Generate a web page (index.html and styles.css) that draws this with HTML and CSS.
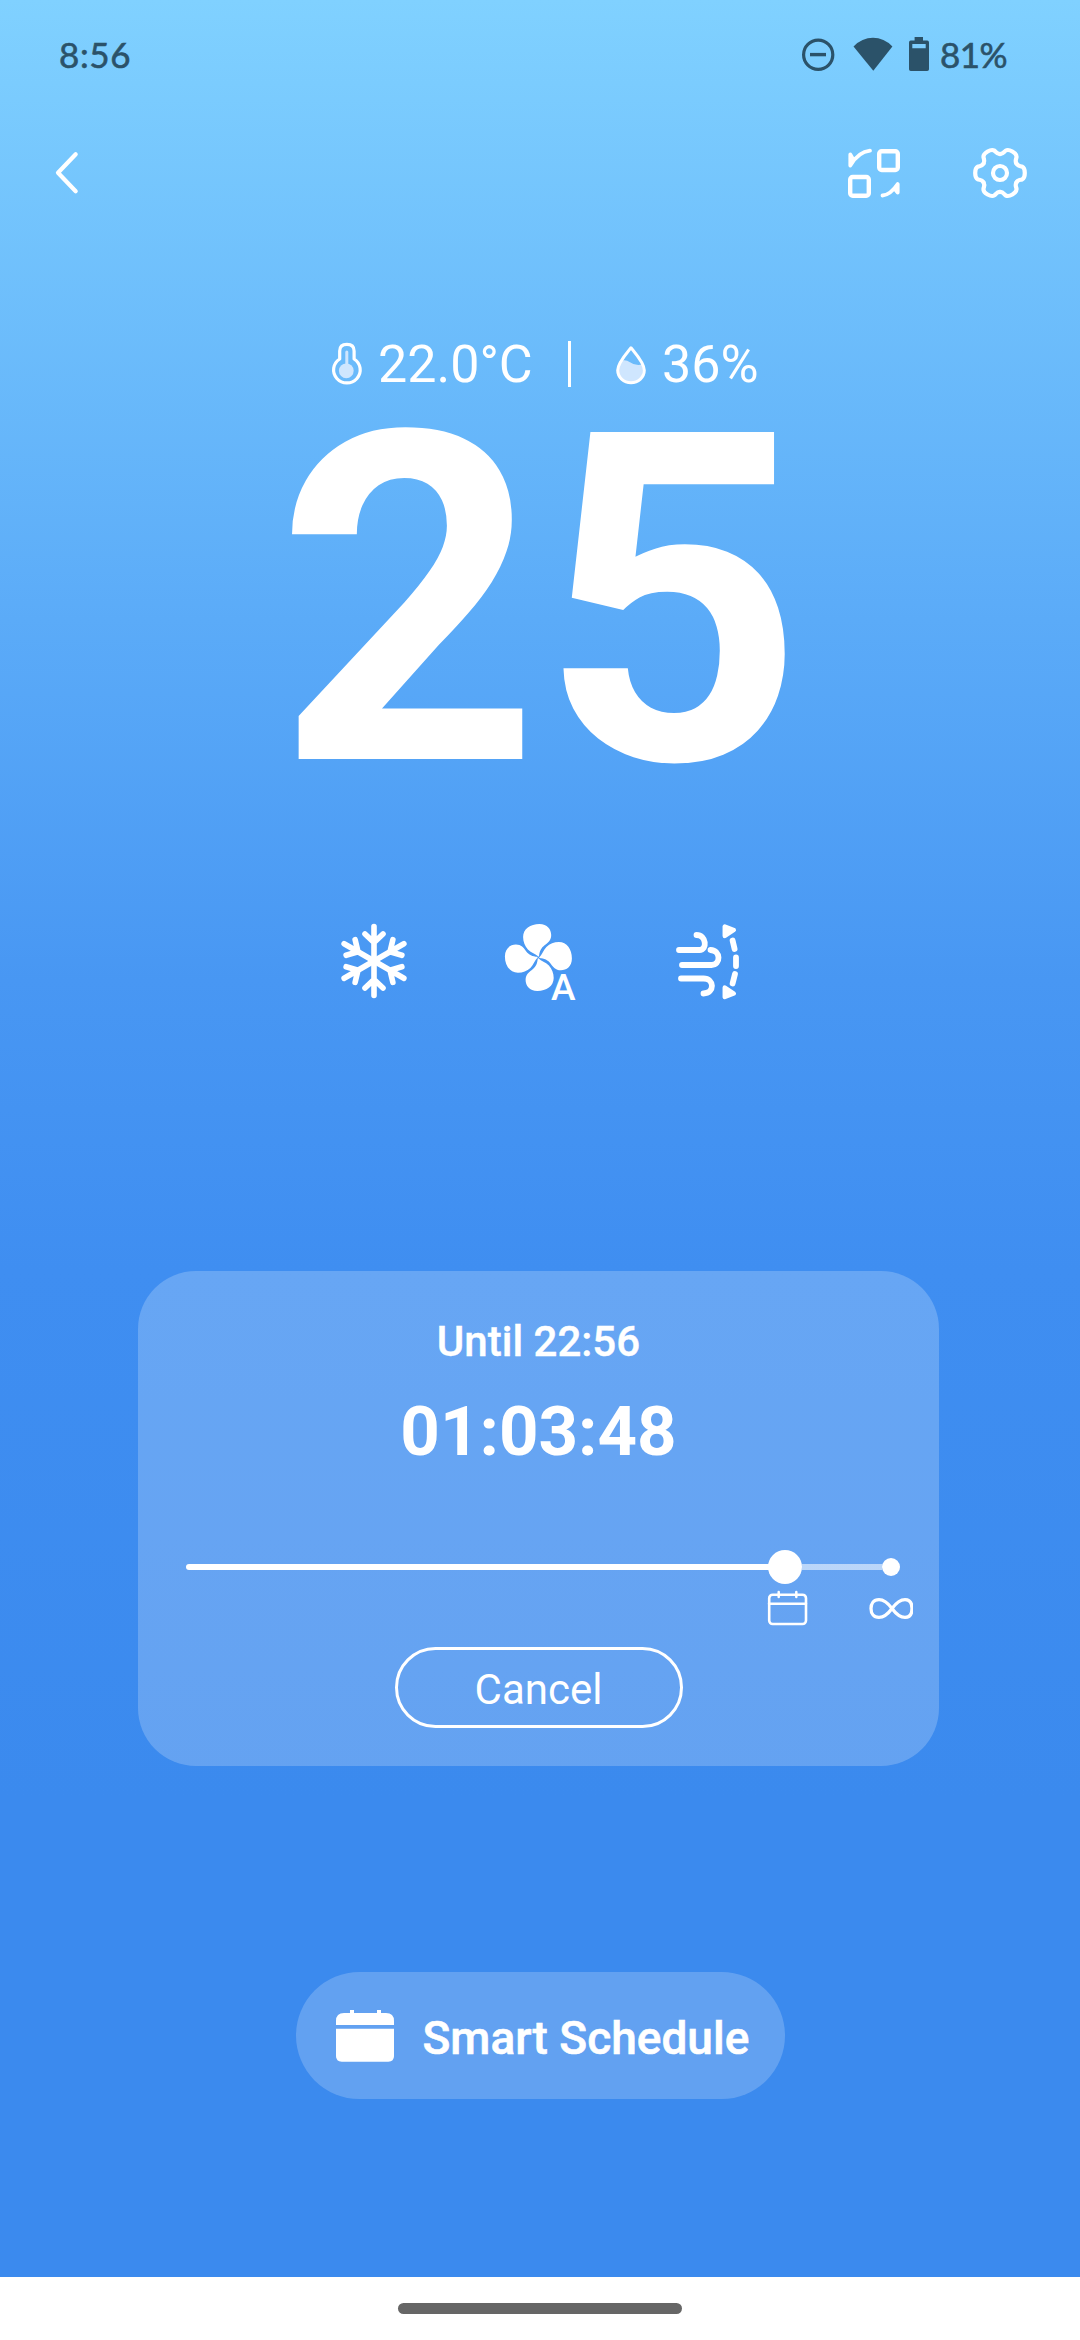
FILE: index.html
```html
<!DOCTYPE html>
<html lang="en">
<head>
<meta charset="utf-8">
<title>Air conditioner</title>
<link rel="stylesheet" href="styles.css">
</head>
<body>
<main class="screen">
  <header class="status">
    <span class="clock">8:56</span>
    <svg class="status-icons" width="132" height="40" viewBox="800 35 132 40">
      <circle cx="818.2" cy="54.7" r="14.6" fill="none" stroke="currentColor" stroke-width="3.2"/>
      <path d="M810 54.6h16" stroke="currentColor" stroke-width="3.4"/>
      <path d="M853.5 46.5Q862 37.8 873 37.8T892.4 46.5L873.3 70.8Z" fill="currentColor"/>
      <path fill-rule="evenodd" d="M914.6 37h8.4v3.6h4.2q1.8 0 1.8 1.8v26.8q0 1.8-1.8 1.8h-16.4q-1.8 0-1.8-1.8V42.400q0-1.800 1.800-1.800h3.800zM912.300 44v4.200h13.400V44z" fill="currentColor"/>
    </svg>
    <span class="battery">81%</span>
  </header>

  <nav class="toolbar">
    <svg width="30" height="50" viewBox="52 148 30 50" class="line">
      <path d="M75.700 154.200L58 172.700l17.700 18.500" stroke-width="4.200"/>
    </svg>
    <div class="actions">
      <svg width="56" height="56" viewBox="846 145 56 56" class="line">
        <rect x="879.200" y="151.200" width="18.600" height="18.800" rx="2.500" stroke-width="4.400"/>
        <rect x="850.200" y="177" width="18.600" height="18.800" rx="2.500" stroke-width="4.400"/>
        <path d="M870 150.700C862 151.500 856 156 850.300 165.500V154.500L853.500 160" stroke-width="3.800"/>
        <path d="M882.500 195.500C889 195 893 191 897.700 184V192.500L894.500 188.500" stroke-width="3.800"/>
      </svg>
      <svg width="60" height="56" viewBox="-30 -28 60 56" class="line gear">
        <defs><path id="tooth" d="M16.400-9.500C18.200-6.400 20.300-7.200 22.200-6.300C24.200-5.300 24.800-3.600 24.800 0S24.200 5.300 22.200 6.300C20.300 7.200 18.200 6.400 16.400 9.500"/></defs>
        <use href="#tooth"/><use href="#tooth" transform="rotate(60)"/><use href="#tooth" transform="rotate(120)"/>
        <use href="#tooth" transform="rotate(180)"/><use href="#tooth" transform="rotate(240)"/><use href="#tooth" transform="rotate(300)"/>
        <circle r="7"/>
      </svg>
    </div>
  </nav>

  <section class="climate">
    <svg width="34" height="46" viewBox="330 339 34 46" class="line">
      <path d="M339.700 357V349q0-6.700 7.200-6.700t7.200 6.700v8a13.300 13 0 1 1-14.400 0z" stroke-width="3.200"/>
      <circle cx="346.300" cy="368.800" r="7.400" class="soft"/>
      <path d="M346.800 350v18" class="soft-line" stroke-width="3"/>
    </svg>
    <span class="reading temp">22.0°C</span>
    <i class="divider"></i>
    <svg width="34" height="46" viewBox="614 339 34 46" class="line drop">
      <path d="M619.500 359.500q5.500-3 10.500.8t12.500 2.200q3 18-11.500 18t-13.500-12z" class="soft"/>
      <path d="M631 345.800C636 352 644.300 361 644.300 368.300A13.300 12.500 0 0 1 617.700 368.300C617.700 361 626 352 631 345.800z" stroke-width="3"/>
    </svg>
    <span class="reading">36%</span>
  </section>

  <div class="target">25</div>

  <section class="modes">
    <svg width="70" height="80" viewBox="-35 -40 70 80" class="line snow">
      <defs><path id="arm" d="M0 0V-34.500M-9-27L0-18.500L9-27"/></defs>
      <use href="#arm"/><use href="#arm" transform="rotate(60)"/><use href="#arm" transform="rotate(120)"/>
      <use href="#arm" transform="rotate(180)"/><use href="#arm" transform="rotate(240)"/><use href="#arm" transform="rotate(300)"/>
    </svg>
    <svg width="80" height="92" viewBox="503 921 80 92" fill="#fff">
      <defs><path id="blade" d="M0-.8C-3-4-7-4.500-10.500-8C-13.500-11.500-15.300-15.500-15.300-20.500C-15.300-28.500-8-33.500 1-33.500C9-33.500 12.800-28 12.800-22.500C12.800-17 9.500-14.800 6.500-12.500C2.500-9.500 1-6 .6-.8Z"/></defs>
      <g transform="translate(538.400 957.400)"><use href="#blade"/><use href="#blade" transform="rotate(90)"/><use href="#blade" transform="rotate(180)"/><use href="#blade" transform="rotate(270)"/></g>
      <text x="563.200" y="1000" class="auto">A</text>
    </svg>
    <svg width="66" height="80" viewBox="675 921 66 80" class="line">
      <g stroke-width="5.800">
        <path d="M679 950h20.500c8 0 7-15-3-15"/>
        <path d="M682 965h29.500c9.500 0 9.500-14.500-1-15"/>
        <path d="M681 978.500h22.500c11 0 11.500 14.500 0 15"/>
        <path d="M732.600 940.500l2 8.500M736 957.500v8.500M735 974l-2.400 9.500"/>
      </g>
      <path d="M724.800 926.500v9.500l9-6zM724.800 997v-9.500l9 6z" fill="#fff" stroke-width="4.500"/>
    </svg>
  </section>

  <section class="timer">
    <div class="until">Until 22:56</div>
    <div class="countdown">01:03:48</div>
    <div class="slider"><i class="fill"></i><i class="knob"></i><i class="rest"></i><i class="end"></i></div>
    <div class="marks">
      <svg width="42" height="38" viewBox="767 1589 42 38" class="line">
        <rect x="769.200" y="1594.700" width="36.800" height="29.300" rx="3.500" stroke-width="2.600"/>
        <path d="M769 1603.800h37M778.700 1592v5M796.300 1592v5" stroke-width="2.500"/>
      </svg>
      <svg width="44" height="38" viewBox="869 1589 44 38" class="line">
        <path d="M892 1608.500C886.500 1601 883 1599.600 879 1599.600C873.500 1599.600 871 1603.500 871 1608.500S873.500 1617.400 879 1617.400C883 1617.400 886.500 1616 892 1608.500S901 1599.600 905 1599.600C910.500 1599.600 912 1603.500 912 1608.500S910.500 1617.400 905 1617.400C901 1617.400 897.500 1616 892 1608.500z" stroke-width="3.300"/>
      </svg>
    </div>
    <button class="cancel">Cancel</button>
  </section>

  <button class="schedule">
    <svg width="60" height="54" viewBox="335 2008 60 54" fill="#fff">
      <path d="M336 2024v-4q0-8 8-8h6v-3h4v3h23v-3h4v3h5q8 0 8 8v4z"/>
      <path d="M336 2027.800h58V2055q0 5.700-5.700 5.700h-46.600q-5.700 0-5.700-5.700z"/>
    </svg>
    <span>Smart Schedule</span>
  </button>

  <footer class="home"><i class="handle"></i></footer>
</main>
</body>
</html>
```
FILE: styles.css
```css
* { box-sizing: border-box; }
body { margin: 0; font-family: Roboto, sans-serif; color: #fff; }
svg { display: block; flex: none; }
button { font: inherit; color: inherit; margin: 0; }

.screen {
  width: 1080px;
  height: 2340px;
  overflow: hidden;
  display: flex;
  flex-direction: column;
  align-items: center;
  background: linear-gradient(180deg, #80d1ff 0, #5babf8 620px, #4897f3 980px, #3f8ef1 1270px, #3b8aee 1800px, #3b8aee 2277px);
}

.line { fill: none; stroke: #fff; stroke-linecap: round; stroke-linejoin: round; }
.soft { fill: #cfe6fe; stroke: none; }
.soft-line { stroke: #cfe6fe; }
.gear { stroke-width: 4.2; }
.snow { stroke-width: 5.6; }

.status {
  align-self: stretch;
  height: 110px;
  padding: 0 74px 0 59px;
  display: flex;
  align-items: center;
  color: #2b5269;
  font: 35px Lato, sans-serif;
  -webkit-text-stroke: .6px #2b5269;
}
.clock { letter-spacing: .6px; padding-bottom: 3px; }
.status-icons { margin-left: auto; }
.battery { width: 66px; margin-left: 8px; padding-bottom: 3px; letter-spacing: -.6px; }

.toolbar {
  align-self: stretch;
  height: 126px;
  padding: 0 50px 0 52px;
  display: flex;
  align-items: center;
  justify-content: space-between;
}
.actions { display: flex; align-items: center; gap: 68px; }

.climate {
  align-self: stretch;
  height: 60px;
  margin-top: 98px;
  padding-left: 330px;
  display: flex;
  align-items: center;
}
.reading { font-size: 52px; line-height: 60px; padding-top: 1px; }
.temp { width: 190px; margin-left: 14px; }
.divider { width: 3px; height: 46px; background: #fff; }
.drop { margin: 0 14px 0 43px; }

.target {
  margin-top: 28px;
  height: 360px;
  font-size: 460px;
  line-height: 360px;
  font-weight: 700;
}

.modes {
  align-self: stretch;
  margin-top: 139px;
  padding-left: 339px;
  height: 80px;
  display: flex;
  align-items: flex-start;
}
.modes svg + svg { margin-left: 94px; }
.modes svg:last-child { margin-left: 92px; }
.auto { font: 500 37px Roboto, sans-serif; text-anchor: middle; }

.timer {
  width: 801px;
  height: 495px;
  margin-top: 270px;
  margin-right: 3px;
  padding: 46px 0 0;
  border-radius: 58px;
  background: rgba(255, 255, 255, .21);
  display: flex;
  flex-direction: column;
  align-items: center;
}
.until { font-size: 42px; line-height: 50px; font-weight: 500; -webkit-text-stroke: .4px #fff; }
.countdown { font-size: 69px; line-height: 80px; font-weight: 700; margin-top: 25px; }
.slider { align-self: stretch; height: 34px; margin: 78px 39px 0 48px; display: flex; align-items: center; }
.fill { width: 585px; height: 6px; border-radius: 3px 0 0 3px; background: #fff; }
.knob { width: 34px; height: 34px; margin-left: -3px; border-radius: 50%; background: #fff; }
.rest { flex: 1; height: 6px; background: rgba(255, 255, 255, .55); }
.end { width: 18px; height: 18px; border-radius: 50%; background: #fff; }
.marks { align-self: stretch; display: flex; margin: 5px 0 0 629px; gap: 60px; }
.cancel {
  width: 288px;
  height: 81px;
  margin-top: 20px;
  padding: 3px 0 0;
  border: 3px solid #fff;
  border-radius: 41px;
  background: none;
  font-size: 42px;
}

.schedule {
  width: 489px;
  height: 127px;
  margin-top: 206px;
  padding: 0 0 0 39px;
  border: 0;
  border-radius: 64px;
  background: rgba(255, 255, 255, .2);
  display: flex;
  align-items: center;
  gap: 28px;
  font-size: 46px;
  font-weight: 500;
  -webkit-text-stroke: .6px #fff;
}
.schedule span { padding-top: 5px; }

.home {
  align-self: stretch;
  height: 63px;
  margin-top: auto;
  padding-top: 26px;
  background: #fff;
  display: flex;
  justify-content: center;
}
.handle { width: 284px; height: 11px; border-radius: 6px; background: #666; }
```
